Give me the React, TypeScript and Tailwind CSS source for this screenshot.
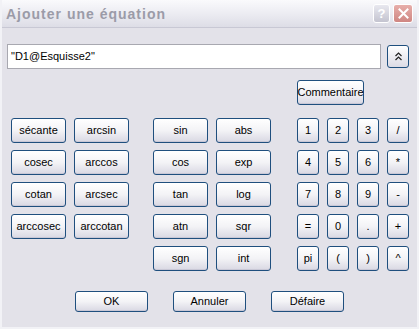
import React from "react";

const font = { fontFamily: '"Liberation Sans", "DejaVu Sans", sans-serif' };

function Btn({ label, w = "w-[55px]", h = "h-[25px]" }: { label: string; w?: string; h?: string }) {
  return (
    <button
      className={`${w} ${h} shrink-0 rounded-[3px] border border-[#1f4f7e] bg-gradient-to-b from-white via-[#f3f3f6] to-[#d9d8e3] text-[11px] text-black leading-none flex items-center justify-center shadow-[inset_0_-1px_0_#c9c8d6]`}
    >
      {label}
    </button>
  );
}

const left = [
  ["sécante", "arcsin"],
  ["cosec", "arccos"],
  ["cotan", "arcsec"],
  ["arccosec", "arccotan"],
];
const mid = [
  ["sin", "abs"],
  ["cos", "exp"],
  ["tan", "log"],
  ["atn", "sqr"],
  ["sgn", "int"],
];
const pad = [
  ["1", "2", "3", "/"],
  ["4", "5", "6", "*"],
  ["7", "8", "9", "-"],
  ["=", "0", ".", "+"],
  ["pi", "(", ")", "^"],
];

export default function App() {
  return (
    <div
      className="w-[419px] h-[329px] bg-[#e3e2e9] border-l-2 border-r-2 border-b-2 border-[#f2f2f6] flex flex-col overflow-hidden"
      style={font}
    >
      {/* Title bar */}
      <div className="h-[28px] shrink-0 flex items-center bg-gradient-to-b from-[#fafafc] via-[#ececf2] to-[#dddde6] border-b border-[#c8c8d4] -mx-[2px] px-[6px]">
        <span className="text-[14px] font-bold text-[#9b9ba8] tracking-[1px] flex-1 pt-[1px]">
          Ajouter une équation
        </span>
        <div className="flex gap-[3px] items-center">
          <div className="w-[17px] h-[19px] rounded-[3px] border border-white bg-gradient-to-b from-[#e8e8ef] to-[#c4c4d0] flex items-center justify-center text-[13px] font-bold text-white">
            ?
          </div>
          <div className="w-[20px] h-[19px] rounded-[3px] border border-white bg-gradient-to-b from-[#e7aeaa] to-[#cf8682] flex items-center justify-center">
            <svg width="11" height="11" viewBox="0 0 11 11">
              <path d="M1.5 1.5 L9.5 9.5 M9.5 1.5 L1.5 9.5" stroke="white" strokeWidth="2" strokeLinecap="square" />
            </svg>
          </div>
        </div>
      </div>

      {/* Expression field */}
      <div className="flex items-center mt-[16px] pl-[5px]">
        <div className="w-[374px] h-[25px] bg-white border border-[#a8a8b0] flex items-center px-[3px] text-[11px] text-black">
          "D1@Esquisse2"
        </div>
        <div className="ml-[6px] w-[22px] h-[23px] rounded-[3px] border border-[#1f4f7e] bg-gradient-to-b from-white to-[#dcdbe5] flex items-center justify-center">
          <svg width="9" height="9" viewBox="0 0 9 9">
            <path d="M1.5 4 L4.5 1 L7.5 4 M1.5 8 L4.5 5 L7.5 8" fill="none" stroke="#222" strokeWidth="1.2" />
          </svg>
        </div>
      </div>

      <div className="flex mt-[11px] pl-[295px]">
        <Btn label="Commentaire" w="w-[67px]" h="h-[25px]" />
      </div>

      {/* Keypad */}
      <div className="flex mt-[13px] pl-[9px]">
        <div className="flex flex-col gap-[7px]">
          {left.map((r) => (
            <div key={r[0]} className="flex gap-[8px]">
              {r.map((l) => (
                <Btn key={l} label={l} />
              ))}
            </div>
          ))}
        </div>
        <div className="flex flex-col gap-[7px] ml-[24px]">
          {mid.map((r) => (
            <div key={r[0]} className="flex gap-[8px]">
              {r.map((l) => (
                <Btn key={l} label={l} />
              ))}
            </div>
          ))}
        </div>
        <div className="flex flex-col gap-[7px] ml-[26px]">
          {pad.map((r) => (
            <div key={r[0]} className="flex gap-[8px]">
              {r.map((l) => (
                <Btn key={l} label={l} w="w-[22px]" />
              ))}
            </div>
          ))}
        </div>
      </div>

      {/* Bottom buttons */}
      <div className="flex mt-[20px] pl-[73px] gap-[25px]">
        <Btn label="OK" w="w-[73px]" h="h-[21px]" />
        <Btn label="Annuler" w="w-[73px]" h="h-[21px]" />
        <Btn label="Défaire" w="w-[73px]" h="h-[21px]" />
      </div>
    </div>
  );
}
